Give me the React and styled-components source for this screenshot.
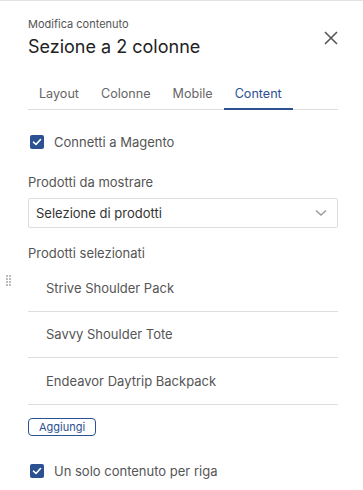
import React from 'react';
import styled, { createGlobalStyle } from 'styled-components';

const Global = createGlobalStyle`
  body {
    margin: 0;
    background: #fff;
    font-family: Inter, "Noto Sans", sans-serif;
  }
`;

const Panel = styled.div`
  position: relative;
  width: 363px;
  height: 490px;
  box-sizing: border-box;
  border-top: 1px solid #e2e2e2;
  padding: 16px 25px 0 28px;
  overflow: hidden;
`;

const Header = styled.div`
  display: flex;
  justify-content: space-between;
  align-items: flex-start;
`;

const Eyebrow = styled.div`
  font-size: 11px;
  color: #555;
  line-height: 14px;
`;

const Title = styled.h1`
  margin: 4px 0 0;
  font-size: 18px;
  font-weight: 400;
  color: #222;
  line-height: 24px;
`;

const Close = styled.button`
  border: none;
  background: none;
  padding: 0;
  margin-top: 14px;
  width: 14px;
  height: 14px;
  cursor: pointer;
`;

const Tabs = styled.div`
  display: flex;
  margin-top: 20px;
  border-bottom: 1px solid #ddd;
`;

const Tab = styled.div`
  padding: 7px 11px 6px;
  font-size: 12.6px;
  line-height: 16px;
  color: ${p => (p.$active ? '#2c5192' : '#666')};
  border-bottom: 2px solid ${p => (p.$active ? '#2c5192' : 'transparent')};
  margin-bottom: -1px;
`;

const CheckRow = styled.label`
  display: flex;
  align-items: center;
  gap: 10px;
  padding-left: 2px;
  font-size: 13px;
  color: #555;
  margin-top: ${p => p.$mt || 0}px;
`;

const Box = styled.span`
  width: 14px;
  height: 14px;
  border-radius: 2px;
  background: #2c5192;
  display: inline-flex;
  align-items: center;
  justify-content: center;
`;

const FieldLabel = styled.div`
  font-size: 13px;
  color: #555;
  line-height: 16px;
  margin-top: ${p => p.$mt}px;
`;

const Select = styled.div`
  display: flex;
  justify-content: space-between;
  align-items: center;
  height: 28px;
  margin-top: 8px;
  padding: 0 10px 0 7px;
  border: 1px solid #ddd;
  border-radius: 2px;
  font-size: 13px;
  color: #333;
`;

const List = styled.div`
  margin-top: 4px;
`;

const Item = styled.div`
  position: relative;
  height: 45.5px;
  display: flex;
  align-items: center;
  padding-left: 18px;
  font-size: 13px;
  color: #555;
  border-bottom: 1px solid #ddd;
`;

const Handle = styled.span`
  position: absolute;
  left: -22px;
  top: 10px;
  display: grid;
  grid-template-columns: repeat(2, 2px);
  gap: 1px;
`;

const Dot = styled.i`
  width: 2px;
  height: 2px;
  background: #bbb;
`;

const AddButton = styled.button`
  margin-top: 13px;
  padding: 1px 10px;
  border: 1px solid #2c5192;
  border-radius: 4px;
  background: #fff;
  font-family: inherit;
  font-size: 11px;
  line-height: 14px;
  color: #2c5192;
`;

const Check = () => (
  <Box>
    <svg width="10" height="10" viewBox="0 0 10 10">
      <path d="M1.5 5.2 L4 7.5 L8.5 2.5" stroke="#fff" strokeWidth="1.6" fill="none" strokeLinecap="round" strokeLinejoin="round" />
    </svg>
  </Box>
);

const products = ['Strive Shoulder Pack', 'Savvy Shoulder Tote', 'Endeavor Daytrip Backpack'];

export default function App() {
  return (
    <>
      <Global />
      <Panel>
        <Header>
          <div>
            <Eyebrow>Modifica contenuto</Eyebrow>
            <Title>Sezione a 2 colonne</Title>
          </div>
          <Close aria-label="chiudi">
            <svg width="14" height="14" viewBox="0 0 14 14">
              <path d="M1 1 L13 13 M13 1 L1 13" stroke="#555" strokeWidth="1.6" />
            </svg>
          </Close>
        </Header>

        <Tabs>
          <Tab>Layout</Tab>
          <Tab>Colonne</Tab>
          <Tab>Mobile</Tab>
          <Tab $active>Content</Tab>
        </Tabs>

        <CheckRow $mt={24}>
          <Check />
          Connetti a Magento
        </CheckRow>

        <FieldLabel $mt={24}>Prodotti da mostrare</FieldLabel>
        <Select>
          Selezione di prodotti
          <svg width="12" height="8" viewBox="0 0 12 8">
            <path d="M1 1.5 L6 6 L11 1.5" stroke="#999" strokeWidth="1.4" fill="none" />
          </svg>
        </Select>

        <FieldLabel $mt={17}>Prodotti selezionati</FieldLabel>
        <List>
          {products.map((p, i) => (
            <Item key={p}>
              {i === 0 && (
                <Handle>
                  {Array.from({ length: 8 }).map((_, k) => <Dot key={k} />)}
                </Handle>
              )}
              {p}
            </Item>
          ))}
        </List>

        <AddButton>Aggiungi</AddButton>

        <CheckRow $mt={27}>
          <Check />
          Un solo contenuto per riga
        </CheckRow>
      </Panel>
    </>
  );
}
